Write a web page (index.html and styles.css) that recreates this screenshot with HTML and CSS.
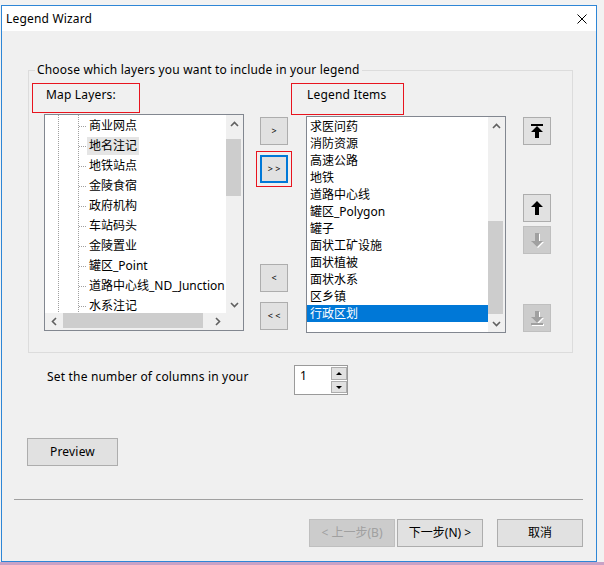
FILE: index.html
```html
<!DOCTYPE html>
<html>
<head>
<meta charset="utf-8">
<title>Legend Wizard</title>
<link rel="stylesheet" href="styles.css">
</head>
<body>
<div class="dialog">
  <div class="titlebar">
    <span class="title latin">Legend Wizard</span>
    <svg class="close" width="10" height="10" viewBox="0 0 10 10"><path d="M0.5 0.5 L9.5 9.5 M9.5 0.5 L0.5 9.5" stroke="#000" stroke-width="1" fill="none"/></svg>
  </div>
  <div class="content">
    <div class="group">
      <div class="group-label latin">Choose which layers you want to include in your legend</div>
      <div class="panes">
        <div class="col-left">
          <div class="mark mark-map latin">Map Layers:</div>
          <div class="listbox tree-list">
            <div class="tree">
              <div class="node"><span class="node-label">商业网点</span></div>
              <div class="node"><span class="node-label hover">地名注记</span></div>
              <div class="node"><span class="node-label">地铁站点</span></div>
              <div class="node"><span class="node-label">金陵食宿</span></div>
              <div class="node"><span class="node-label">政府机构</span></div>
              <div class="node"><span class="node-label">车站码头</span></div>
              <div class="node"><span class="node-label">金陵置业</span></div>
              <div class="node"><span class="node-label">罐区_Point</span></div>
              <div class="node"><span class="node-label">道路中心线_ND_Junction</span></div>
              <div class="node"><span class="node-label">水系注记</span></div>
            </div>
            <div class="vscroll">
              <div class="sb-arrow"><svg width="9" height="6" viewBox="0 0 9 6"><path d="M1 5 L4.5 1.5 L8 5" fill="none" stroke="#606060" stroke-width="1.6"/></svg></div>
              <div class="sb-track"><div class="thumb vthumb-left"></div></div>
              <div class="sb-arrow"><svg width="9" height="6" viewBox="0 0 9 6"><path d="M1 1 L4.5 4.5 L8 1" fill="none" stroke="#606060" stroke-width="1.6"/></svg></div>
            </div>
            <div class="hscroll">
              <div class="sb-arrow"><svg width="6" height="9" viewBox="0 0 6 9"><path d="M5 1 L1.5 4.5 L5 8" fill="none" stroke="#606060" stroke-width="1.6"/></svg></div>
              <div class="sb-track"><div class="thumb hthumb"></div></div>
              <div class="sb-arrow"><svg width="6" height="9" viewBox="0 0 6 9"><path d="M1 1 L4.5 4.5 L1 8" fill="none" stroke="#606060" stroke-width="1.6"/></svg></div>
            </div>
            <div class="corner"></div>
          </div>
        </div>
        <div class="col-mid">
          <button class="btn sm m1">&gt;</button>
          <button class="btn sm m2 focus">&gt; &gt;</button>
          <button class="btn sm m3">&lt;</button>
          <button class="btn sm m4">&lt; &lt;</button>
        </div>
        <div class="col-right">
          <div class="mark mark-legend latin">Legend Items</div>
          <div class="listbox items-list">
            <div class="items">
              <div class="item">求医问药</div>
              <div class="item">消防资源</div>
              <div class="item">高速公路</div>
              <div class="item">地铁</div>
              <div class="item">道路中心线</div>
              <div class="item">罐区_Polygon</div>
              <div class="item">罐子</div>
              <div class="item">面状工矿设施</div>
              <div class="item">面状植被</div>
              <div class="item">面状水系</div>
              <div class="item">区乡镇</div>
              <div class="item sel">行政区划</div>
            </div>
            <div class="vscroll">
              <div class="sb-arrow"><svg width="9" height="6" viewBox="0 0 9 6"><path d="M1 5 L4.5 1.5 L8 5" fill="none" stroke="#606060" stroke-width="1.6"/></svg></div>
              <div class="sb-track"><div class="thumb vthumb-right"></div></div>
              <div class="sb-arrow"><svg width="9" height="6" viewBox="0 0 9 6"><path d="M1 1 L4.5 4.5 L8 1" fill="none" stroke="#606060" stroke-width="1.6"/></svg></div>
            </div>
          </div>
        </div>
        <div class="col-order">
          <button class="btn sm o1" title="Move to top">
            <svg width="12" height="14" viewBox="0 0 12 14"><rect x="0" y="0" width="12" height="2" fill="#000"/><path d="M6 2 L12 8 H8 V14 H4 V8 H0 Z" fill="#000"/></svg>
          </button>
          <button class="btn sm o2" title="Move up">
            <svg width="12" height="14" viewBox="0 0 12 14"><path d="M6 0 L12 6 H8 V14 H4 V6 H0 Z" fill="#000"/></svg>
          </button>
          <button class="btn sm o3 disabled" title="Move down">
            <svg width="13" height="15" viewBox="0 0 13 15"><path d="M5 1 H9 V9 H13 L7 15 L1 9 H5 Z" fill="#fff"/><path d="M4 0 H8 V8 H12 L6 14 L0 8 H4 Z" fill="#a0a0a0"/></svg>
          </button>
          <button class="btn sm o4 disabled" title="Move to bottom">
            <svg width="13" height="15" viewBox="0 0 13 15"><path d="M5 1 H9 V7 H13 L7 13 L1 7 H5 Z" fill="#fff"/><rect x="1" y="13" width="12" height="2" fill="#fff"/><path d="M4 0 H8 V6 H12 L6 12 L0 6 H4 Z" fill="#a0a0a0"/><rect x="0" y="12" width="12" height="2" fill="#a0a0a0"/></svg>
          </button>
        </div>
      </div>
    </div>
    <div class="columns-row">
      <span class="columns-label latin">Set the number of columns in your</span>
      <div class="spinner">
        <span class="spin-value">1</span>
        <div class="spin-btns">
          <span class="spin-btn"><span class="tri-up"></span></span>
          <span class="spin-btn down"><span class="tri-down"></span></span>
        </div>
      </div>
    </div>
    <button class="btn preview latin">Preview</button>
    <div class="separator"></div>
    <div class="footer">
      <button class="btn wide disabled">&lt; 上一步(B)</button>
      <button class="btn wide next">下一步(N) &gt;</button>
      <button class="btn wide cancel">取消</button>
    </div>
  </div>
</div>
</body>
</html>
```
FILE: styles.css
```css
* { box-sizing: border-box; }
html, body { margin: 0; padding: 0; }
body {
  width: 604px;
  height: 565px;
  overflow: hidden;
  padding: 5px 0 0 1px;
  background: linear-gradient(to bottom, #f2f2f2 0 562px, #c9a2c6 562px);
  font-family: "Noto Sans", "Noto Sans CJK SC", sans-serif;
  font-size: 12px;
  color: #000;
}
.latin { letter-spacing: 0.18px; }
.dialog {
  width: 596px;
  height: 557px;
  border: 1px solid #2e86d6;
  background: #f0f0f0;
  display: flex;
  flex-direction: column;
}
.titlebar {
  flex: none;
  height: 25px;
  background: #fff;
  display: flex;
  align-items: center;
  justify-content: space-between;
  padding: 0 9px 0 4px;
}
.title { line-height: 16px; }
.close { display: block; }
.content {
  flex: 1;
  display: flex;
  flex-direction: column;
  align-items: flex-start;
}
.group {
  flex: none;
  margin: 39px 0 0 26px;
  width: 545px;
  height: 283px;
  border: 1px solid #dcdcdc;
}
.group-label {
  width: max-content;
  margin: -9px 0 0 6px;
  padding: 0 2px;
  background: #f0f0f0;
  line-height: 16px;
}
.panes {
  display: flex;
  align-items: flex-start;
  margin-top: 5px;
}
.col-left { margin-left: 3px; width: 212px; }
.col-mid { margin-left: 16px; width: 28px; display: flex; flex-direction: column; }
.col-right { margin-left: 3px; width: 215px; }
.col-order { margin-left: 17px; width: 28px; display: flex; flex-direction: column; }

.mark { border: 1px solid #e8141e; line-height: 16px; }
.mark-map { width: 108px; height: 30px; padding: 3px 0 0 13px; }
.mark-legend { width: 113px; height: 32px; padding: 3px 0 0 15px; }

.listbox {
  border: 1px solid #828790;
  background: #fff;
  display: grid;
  width: 200px;
  height: 217px;
}
.tree-list {
  margin: 1px 0 0 12px;
  grid-template-columns: 1fr 17px;
  grid-template-rows: 1fr 17px;
}
.items-list {
  margin: 1px 0 0 15px;
  grid-template-columns: 1fr 17px;
}
.tree {
  overflow: hidden;
  padding-top: 1px;
  background-image:
    repeating-linear-gradient(to bottom, #a0a0a0 0 1px, transparent 1px 2px),
    repeating-linear-gradient(to bottom, #a0a0a0 0 1px, transparent 1px 2px);
  background-size: 1px 100%, 1px 100%;
  background-position: 13px 0, 33px 0;
  background-repeat: no-repeat;
}
.node {
  display: flex;
  align-items: center;
  height: 20px;
  white-space: nowrap;
}
.node::before {
  content: "";
  flex: none;
  width: 8px;
  height: 1px;
  margin-left: 34px;
  background: repeating-linear-gradient(to right, #a0a0a0 0 1px, transparent 1px 2px);
}
.node-label { padding: 0 2px; line-height: 18px; }
.node-label.hover { background: #e5e5e5; }

.items { overflow: hidden; padding-top: 1px; }
.item {
  height: 17px;
  line-height: 17px;
  padding-left: 3px;
  white-space: nowrap;
}
.item.sel { background: #0078d7; color: #fff; }

.vscroll {
  background: #f0f0f0;
  display: flex;
  flex-direction: column;
}
.hscroll {
  background: #f0f0f0;
  display: flex;
}
.corner { background: #f0f0f0; }
.sb-arrow {
  flex: none;
  width: 17px;
  height: 17px;
  display: flex;
  align-items: center;
  justify-content: center;
}
.sb-arrow svg { display: block; }
.sb-track { flex: 1; }
.thumb { background: #cdcdcd; }
.vthumb-left { width: 15px; height: 57px; margin-top: 7px; }
.vthumb-right { width: 15px; height: 93px; margin-top: 87px; }
.hthumb { height: 15px; width: 140px; margin-left: 1px; }

.btn {
  font-family: "Noto Sans", "Noto Sans CJK SC", sans-serif;
  font-size: 12px;
  color: #000;
  background: #e1e1e1;
  border: 1px solid #adadad;
  padding: 0;
  margin: 0;
  display: flex;
  align-items: center;
  justify-content: center;
  line-height: 16px;
}
.btn svg { display: block; }
.btn.sm { width: 28px; height: 28px; font-size: 9px; flex: none; }
.btn.focus {
  border: 2px solid #0078d7;
  outline: 1px solid #e8141e;
  outline-offset: 3px;
}
.btn.disabled { background: #cccccc; border-color: #bfbfbf; color: #a0a0a0; }
.m1 { margin-top: 34px; }
.m2 { margin-top: 10px; }
.m3 { margin-top: 81px; }
.m4 { margin-top: 10px; }
.o1 { margin-top: 34px; }
.o2 { margin-top: 49px; }
.o3 { margin-top: 4px; }
.o4 { margin-top: 50px; }

.columns-row {
  display: flex;
  align-items: flex-start;
  margin: 12px 0 0 45px;
}
.columns-label { width: 247px; margin-top: 4px; line-height: 16px; }
.spinner {
  width: 54px;
  height: 30px;
  border: 1px solid #9a9a9a;
  background: #fff;
  display: flex;
}
.spin-value { flex: 1; padding: 2px 0 0 5px; line-height: 16px; }
.spin-btns {
  width: 16px;
  display: flex;
  flex-direction: column;
  gap: 1px;
  padding-top: 1px;
}
.spin-btn {
  height: 13px;
  border: 1px solid #adadad;
  background: #e1e1e1;
  display: flex;
  align-items: center;
  justify-content: center;
}
.spin-btn.down { height: 12px; }
.tri-up {
  width: 0; height: 0;
  border-left: 3px solid transparent;
  border-right: 3px solid transparent;
  border-bottom: 3px solid #000;
}
.tri-down {
  width: 0; height: 0;
  border-left: 3px solid transparent;
  border-right: 3px solid transparent;
  border-top: 3px solid #000;
}

.preview { margin: 43px 0 0 25px; width: 91px; height: 28px; }
.separator {
  margin: 33px 0 0 12px;
  width: 569px;
  height: 1px;
  background: #a0a0a0;
}
.footer {
  align-self: stretch;
  display: flex;
  justify-content: flex-end;
  padding-right: 13px;
  margin-top: 19px;
}
.btn.wide { width: 86px; height: 28px; }
.btn.next { margin-left: 2px; }
.btn.cancel { margin-left: 14px; }
```
